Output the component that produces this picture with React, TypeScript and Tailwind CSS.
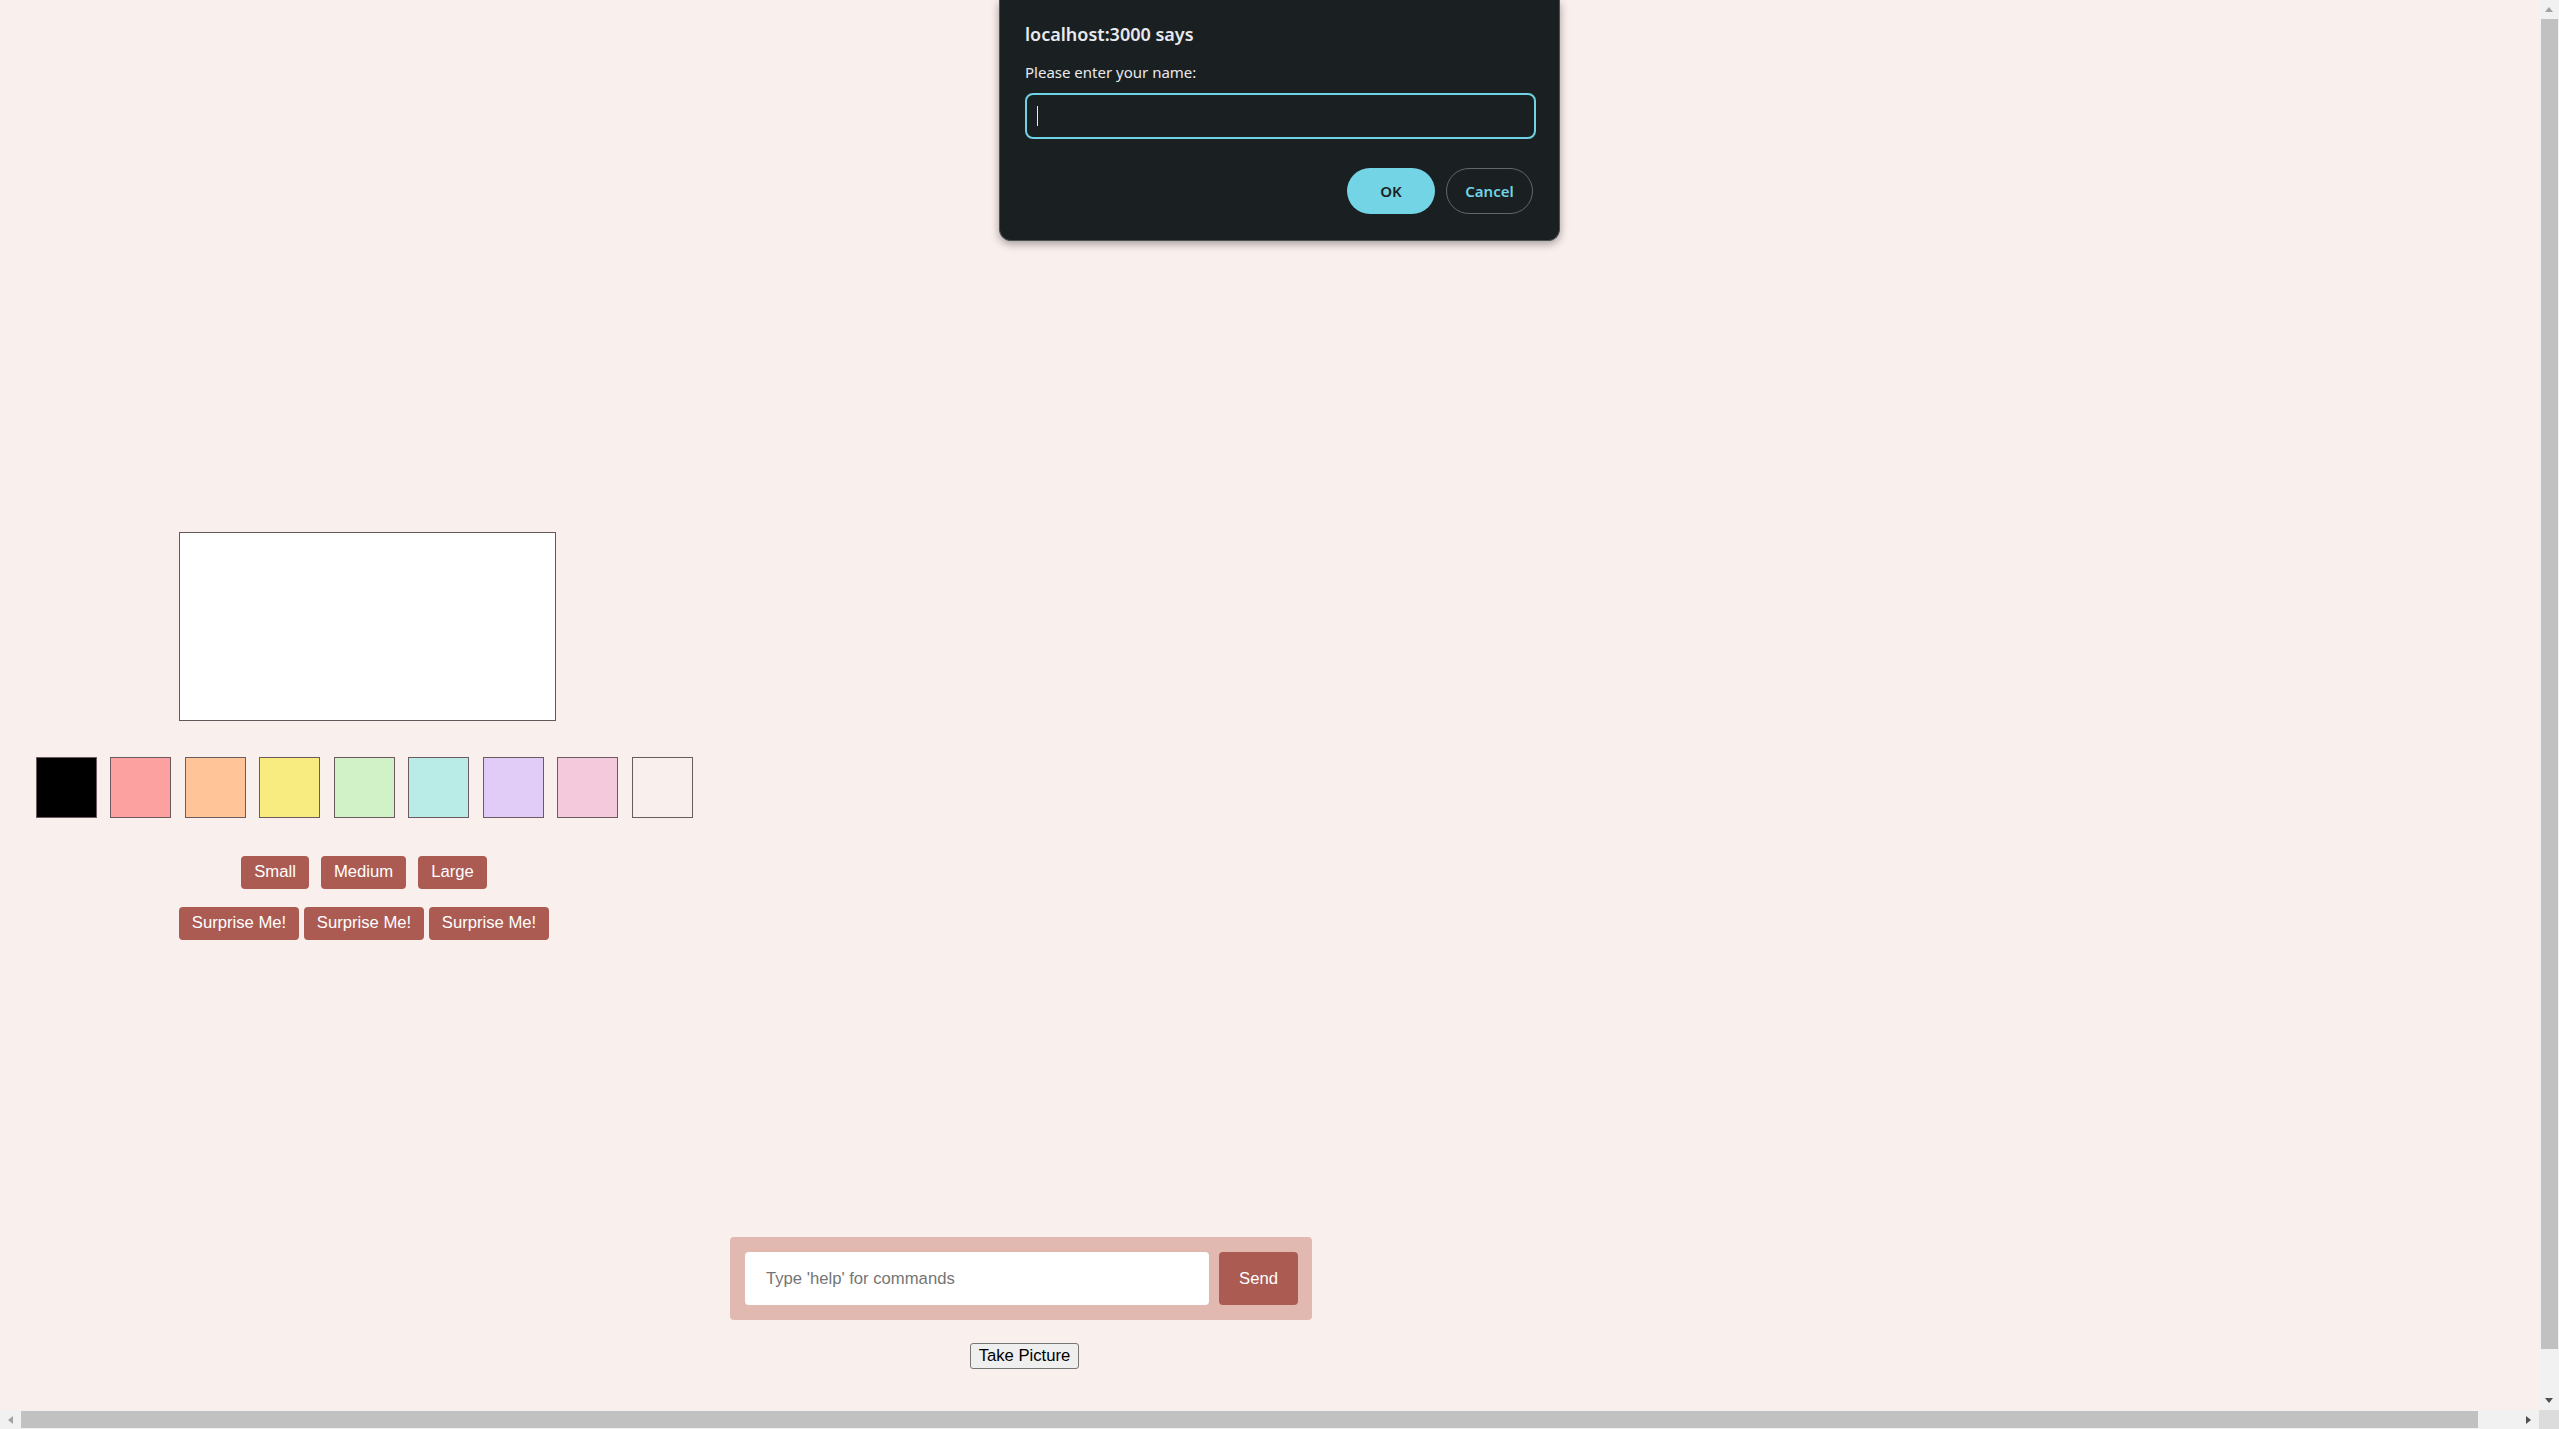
import { useState } from 'react';

const swatches = ['#000000', '#fca0a0', '#ffc599', '#f8ec80', '#d1f2c7', '#b9ece6', '#e0ccf6', '#f4c9dc', '#f9efed'];
const sizes = ['Small', 'Medium', 'Large'];

function PromptDialog() {
  return (
    <div className="absolute top-0 left-[999px] w-[561px] h-[241px] bg-[#1a1f22] rounded-b-[12px] border border-t-0 border-[#4a4f52] shadow-[0_3px_8px_rgba(0,0,0,0.35)] px-[25px] pt-[22px] font-['Noto_Sans','Open_Sans',sans-serif]">
      <div className="text-[18px] leading-[24px] font-semibold text-[#e8eaed]">localhost:3000 says</div>
      <div className="mt-[16px] text-[15px] leading-[20px] text-[#e8eaed]">Please enter your name:</div>
      <div className="mt-[11px] h-[46px] w-[511px] rounded-[8px] border-2 border-[#6fd3e4] flex items-center pl-[10px]">
        <span className="block w-px h-[20px] bg-[#e8eaed]" />
      </div>
      <div className="mt-[29px] flex justify-end gap-[11px] pr-px">
        <button className="h-[46px] w-[88px] rounded-full bg-[#72d4e4] text-[#1a1f22] text-[15px] font-semibold">OK</button>
        <button className="h-[46px] w-[87px] rounded-full border border-[#5f696d] text-[#72d4e4] text-[15px] font-semibold">Cancel</button>
      </div>
    </div>
  );
}

function ToolPanel() {
  const [color, setColor] = useState('#000000');
  const [size, setSize] = useState('Medium');

  return (
    <div className="w-[728px] shrink-0 flex flex-col items-center pt-[532px]">
      <div className="w-[377px] h-[189px] bg-white border border-[#65585d] ml-[7px]" />

      <div className="mt-[36px] flex gap-[13.5px]">
        {swatches.map((c) => (
          <button
            key={c}
            onClick={() => setColor(c)}
            className="w-[61px] h-[61px] border border-[#6b5a60]"
            style={{ backgroundColor: c }}
            aria-pressed={color === c}
          />
        ))}
      </div>

      <div className="mt-[38px] flex gap-[12px]">
        {sizes.map((s) => (
          <button
            key={s}
            onClick={() => setSize(s)}
            aria-pressed={size === s}
            className="h-[33px] px-[13px] rounded-[4px] bg-[#ab5b52] text-white text-[16.67px] leading-none"
          >
            {s}
          </button>
        ))}
      </div>

      <div className="mt-[18px] flex gap-[5px]">
        {[0, 1, 2].map((i) => (
          <button key={i} className="h-[33px] w-[120px] rounded-[4px] bg-[#ab5b52] text-white text-[16.67px] leading-none">
            Surprise Me!
          </button>
        ))}
      </div>
    </div>
  );
}

function ChatArea() {
  const [msg, setMsg] = useState('');

  return (
    <div className="flex flex-col pl-[2px]">
      {/* drawing surface */}
      <div className="h-[1237px]" />
      <div className="w-[582px] h-[83px] bg-[#e1b9b1] rounded-[4px] p-[15px] pr-[14px] flex gap-[10px]">
        <input
          value={msg}
          onChange={(e) => setMsg(e.target.value)}
          placeholder="Type 'help' for commands"
          className="flex-1 min-w-0 h-[53px] bg-white rounded-[4px] pl-[21px] text-[16.67px] text-black placeholder:text-[#757575] outline-none"
        />
        <button className="w-[79px] h-[53px] rounded-[4px] bg-[#ab5b52] text-white text-[16.67px]">Send</button>
      </div>
      <div className="w-[589px] mt-[23px] flex justify-center">
        <button className="h-[26px] px-[8px] bg-[#efefef] border border-[#767676] rounded-[3px] text-black text-[16.67px] leading-none">
          Take Picture
        </button>
      </div>
    </div>
  );
}

function VerticalScrollbar() {
  return (
    <div className="w-[20px] shrink-0 bg-[#f1f1f1] flex flex-col">
      <div className="h-[19px] flex items-center justify-center">
        <span className="block w-0 h-0 border-x-[4.5px] border-x-transparent border-b-[5px] border-b-[#a3a3a3]" />
      </div>
      <div className="h-[1330px] ml-[2px] mr-px bg-[#c1c1c1]" />
      <div className="flex-1" />
      <div className="h-[19px] flex items-center justify-center">
        <span className="block w-0 h-0 border-x-[4.5px] border-x-transparent border-t-[5px] border-t-[#505050]" />
      </div>
    </div>
  );
}

function HorizontalScrollbar() {
  return (
    <div className="h-[19px] flex shrink-0">
      <div className="flex-1 bg-[#f1f1f1] flex items-center">
        <div className="w-[21px] flex justify-center">
          <span className="block w-0 h-0 border-y-[4.5px] border-y-transparent border-r-[5px] border-r-[#a3a3a3]" />
        </div>
        <div className="w-[2457px] h-[17px] bg-[#c1c1c1]" />
        <div className="flex-1" />
        <div className="w-[21px] flex justify-center">
          <span className="block w-0 h-0 border-y-[4.5px] border-y-transparent border-l-[5px] border-l-[#505050]" />
        </div>
      </div>
      <div className="w-[20px] bg-[#dcdcdc]" />
    </div>
  );
}

export default function App() {
  return (
    <div className="h-screen w-screen overflow-hidden flex flex-col bg-[#f9efed] font-['Liberation_Sans',Arial,sans-serif]">
      <div className="flex flex-1 min-h-0">
        <div className="relative flex-1 min-w-0 flex overflow-hidden">
          <ToolPanel />
          <ChatArea />
          <PromptDialog />
        </div>
        <VerticalScrollbar />
      </div>
      <HorizontalScrollbar />
    </div>
  );
}
